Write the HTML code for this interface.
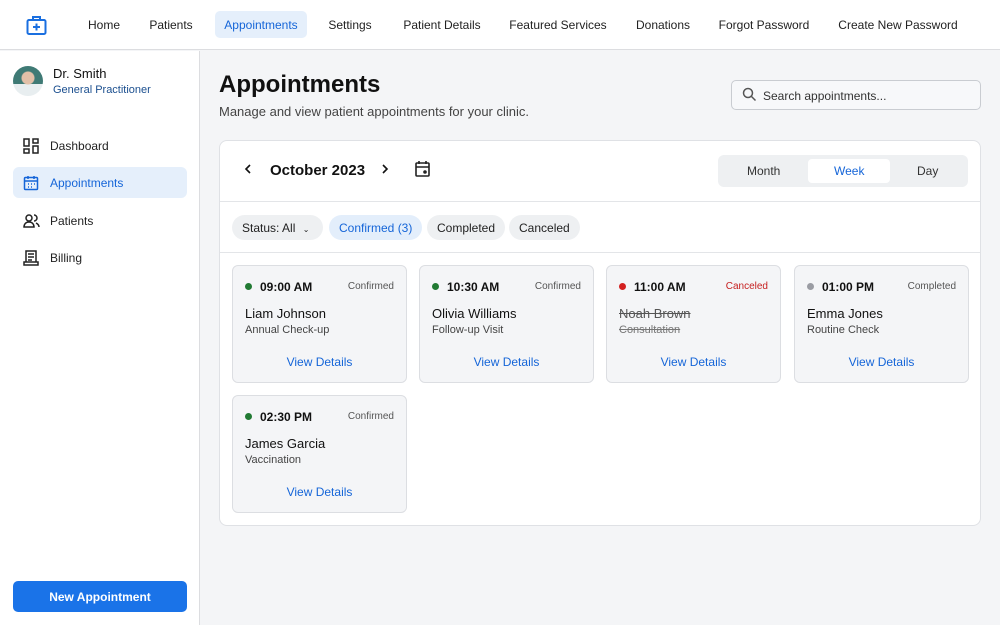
<!DOCTYPE html><html><head><style>
*{box-sizing:border-box;margin:0;padding:0}
body{width:1000px;height:625px;overflow:hidden;font-family:"Liberation Sans",sans-serif;background:#f4f5f7;color:#111;position:relative;font-size:12px}
.a{position:absolute}
.hdr{left:0;top:0;width:1000px;height:50px;background:#fff;border-bottom:1px solid #dcdde0}
.nav{top:11px;height:27px;line-height:28px;font-size:12px;color:#222;transform:translateX(-50%);white-space:nowrap}
.side{left:0;top:51px;width:200px;height:574px;background:#fff;border-right:1px solid #dcdde0}
.mi{left:13px;width:174px;height:31px;border-radius:6px;line-height:33px;font-size:12px;color:#222;padding-left:37px}
.mi svg{position:absolute;left:10px;top:8px}
.card{left:219px;top:140px;width:762px;height:386px;background:#fff;border:1px solid #dfe1e5;border-radius:8px}
.chip{top:215px;height:25px;line-height:26px;border-radius:13px;background:#eef0f2;font-size:12px;padding:0 10px;color:#222}
.ap{width:175px;height:118px;background:#f4f5f7;border:1px solid #dcdee2;border-radius:6px}
.ap .t{position:absolute;left:12px;top:14px;font-size:12px;font-weight:bold;padding-left:15px}
.ap .t:before{content:"";position:absolute;left:0;top:3px;width:7px;height:7px;border-radius:50%;background:var(--c)}
.ap .s{position:absolute;right:12px;top:15px;font-size:10px;color:#555}
.ap .n{position:absolute;left:12px;top:40px;font-size:13px;color:#111}
.ap .d{position:absolute;left:12px;top:58px;font-size:11px;color:#444}
.ap .v{position:absolute;left:0;right:0;top:89px;text-align:center;font-size:12px;color:#1565d8}
</style></head><body>
<div class="a hdr"></div>
<svg class="a" style="left:26px;top:15px" width="21" height="21" viewBox="0 0 21 21" fill="none" stroke="#1a6fe0" stroke-width="2"><rect x="1.5" y="5" width="18" height="14" rx="1.5"/><path d="M7 5V2h7v3M10.5 8.5v7M7 12h7"/></svg>
<div class="a nav" style="left:104px">Home</div>
<div class="a nav" style="left:171px">Patients</div>
<div class="a nav" style="left:261px;width:92px;text-align:center;background:#e5effb;border-radius:5px;color:#1565d8">Appointments</div>
<div class="a nav" style="left:350px">Settings</div>
<div class="a nav" style="left:442px">Patient Details</div>
<div class="a nav" style="left:558px">Featured Services</div>
<div class="a nav" style="left:663px">Donations</div>
<div class="a nav" style="left:764px">Forgot Password</div>
<div class="a nav" style="left:898px">Create New Password</div>

<div class="a side"></div>
<div class="a" style="left:13px;top:66px;width:30px;height:30px;border-radius:50%;background:radial-gradient(circle at 50% 40%,#e2c0a8 0 6px,transparent 7px),linear-gradient(#3f7a75 60%,#e8eef0 60%)"></div>
<div class="a" style="left:53px;top:66px;font-size:13px">Dr. Smith</div>
<div class="a" style="left:53px;top:84px;font-size:11px;color:#1b4f8f">General Practitioner</div>
<div class="a mi" style="top:130px"><svg width="16" height="16" viewBox="0 0 16 16" fill="none" stroke="#222" stroke-width="1.5"><rect x="1" y="1" width="5" height="7"/><rect x="10" y="1" width="5" height="4"/><rect x="1" y="11" width="5" height="4"/><rect x="10" y="8" width="5" height="7"/></svg>Dashboard</div>
<div class="a mi" style="top:167px;background:#e5effb;color:#1565d8"><svg width="16" height="16" viewBox="0 0 16 16" fill="none" stroke="#1565d8" stroke-width="1.5"><rect x="1.5" y="2.5" width="13" height="12" rx="1"/><path d="M1.5 6h13M5 1v3M11 1v3M5 9h1M8 9h1M11 9h1M5 12h1M8 12h1"/></svg>Appointments</div>
<div class="a mi" style="top:205px"><svg width="18" height="16" viewBox="0 0 18 16" fill="none" stroke="#222" stroke-width="1.5"><circle cx="6" cy="5" r="3"/><path d="M1 14c0-3 2-5 5-5s5 2 5 5zM11 2a3 3 0 0 1 0 6M13 10c2 1 3 2 3 4"/></svg>Patients</div>
<div class="a mi" style="top:242px"><svg width="16" height="16" viewBox="0 0 16 16" fill="none" stroke="#222" stroke-width="1.5"><path d="M3 1h10v11H3zM5 4h6M5 7h6M5 10h4M1 12h14v3H1z"/></svg>Billing</div>
<div class="a" style="left:13px;top:581px;width:174px;height:31px;border-radius:5px;background:#1a73e8;color:#fff;font-size:12px;font-weight:bold;text-align:center;line-height:33px">New Appointment</div>

<div class="a" style="left:219px;top:71px;font-size:24px;font-weight:bold">Appointments</div>
<div class="a" style="left:219px;top:104px;font-size:13px;color:#444">Manage and view patient appointments for your clinic.</div>
<div class="a" style="left:731px;top:80px;width:250px;height:30px;border:1px solid #c9ccd1;border-radius:5px;background:#f7f8fa"></div>
<svg class="a" style="left:742px;top:87px" width="15" height="15" viewBox="0 0 15 15" fill="none" stroke="#555" stroke-width="1.5"><circle cx="6" cy="6" r="4.5"/><path d="M9.5 9.5l4 4"/></svg>
<div class="a" style="left:763px;top:89px;font-size:12px;color:#333">Search appointments...</div>

<div class="a card"></div>
<div class="a" style="left:220px;top:201px;width:760px;height:1px;background:#e3e5e8"></div>
<div class="a" style="left:220px;top:252px;width:760px;height:1px;background:#e3e5e8"></div>
<svg class="a" style="left:243px;top:163px" width="10" height="12" viewBox="0 0 10 12" fill="none" stroke="#111" stroke-width="1.6"><path d="M7 2L3 6l4 4"/></svg>
<div class="a" style="left:270px;top:162px;font-size:15px;font-weight:bold;color:#111">October 2023</div>
<svg class="a" style="left:380px;top:163px" width="10" height="12" viewBox="0 0 10 12" fill="none" stroke="#111" stroke-width="1.6"><path d="M3 2l4 4-4 4"/></svg>
<svg class="a" style="left:415px;top:160px" width="15" height="17" viewBox="0 0 15 17" fill="none" stroke="#222" stroke-width="1.6"><rect x="1" y="3" width="13" height="13" rx="1"/><path d="M1 7h13M4 1v3M11 1v3"/><circle cx="10" cy="12" r="1" fill="#222"/></svg>
<div class="a" style="left:718px;top:155px;width:250px;height:32px;border-radius:6px;background:#eef0f2"></div>
<div class="a" style="left:808px;top:159px;width:82px;height:24px;border-radius:4px;background:#fff"></div>
<div class="a" style="left:747px;top:164px;font-size:12px;color:#333">Month</div>
<div class="a" style="left:834px;top:164px;font-size:12px;color:#1565d8">Week</div>
<div class="a" style="left:917px;top:164px;font-size:12px;color:#333">Day</div>

<div class="a chip" style="left:232px;width:91px">Status: All <span style="font-size:8px;margin-left:4px">&#8964;</span></div>
<div class="a chip" style="left:329px;background:#e3eefb;color:#1565d8">Confirmed (3)</div>
<div class="a chip" style="left:427px">Completed</div>
<div class="a chip" style="left:509px">Canceled</div>

<div class="a ap" style="left:232px;top:265px;--c:#217a33"><div class="t">09:00 AM</div><div class="s">Confirmed</div><div class="n">Liam Johnson</div><div class="d">Annual Check-up</div><div class="v">View Details</div></div>
<div class="a ap" style="left:419px;top:265px;--c:#217a33"><div class="t">10:30 AM</div><div class="s">Confirmed</div><div class="n">Olivia Williams</div><div class="d">Follow-up Visit</div><div class="v">View Details</div></div>
<div class="a ap" style="left:606px;top:265px;--c:#d32020"><div class="t">11:00 AM</div><div class="s" style="color:#c62020">Canceled</div><div class="n" style="text-decoration:line-through;color:#555">Noah Brown</div><div class="d" style="text-decoration:line-through;color:#777">Consultation</div><div class="v">View Details</div></div>
<div class="a ap" style="left:794px;top:265px;--c:#9a9ca3"><div class="t">01:00 PM</div><div class="s">Completed</div><div class="n">Emma Jones</div><div class="d">Routine Check</div><div class="v">View Details</div></div>
<div class="a ap" style="left:232px;top:395px;--c:#217a33"><div class="t">02:30 PM</div><div class="s">Confirmed</div><div class="n">James Garcia</div><div class="d">Vaccination</div><div class="v">View Details</div></div>
</body></html>
